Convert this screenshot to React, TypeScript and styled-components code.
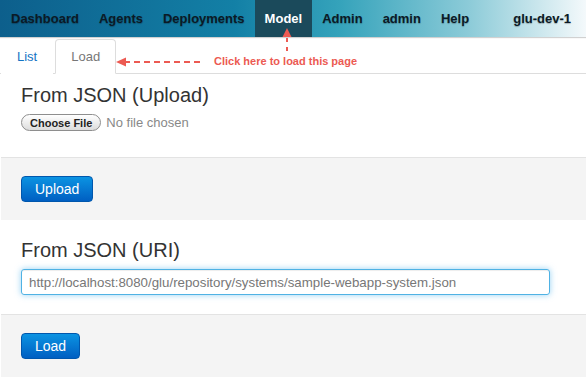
import React from 'react'
import styled, { createGlobalStyle } from 'styled-components'

const GlobalStyle = createGlobalStyle`
  html, body {
    margin: 0;
    padding: 0;
    background: #fff;
    font-family: "Liberation Sans", Arial, Helvetica, sans-serif;
    color: #333;
  }
`

const Page = styled.div`
  position: relative;
  width: 586px;
  min-height: 390px;
`

const NavBar = styled.div`
  display: flex;
  align-items: stretch;
  height: 37px;
  padding-left: 1px;
  background: linear-gradient(to right, #0d5f8c 0%, #1380a6 40%, #35a3bb 58%, #8ccbd8 80%, #f4f9fb 100%);
  box-shadow: 0 1px 1px rgba(0, 0, 0, 0.18);
`

const NavItem = styled.div<{ $active?: boolean; $right?: boolean }>`
  display: flex;
  align-items: center;
  padding: 0 ${({ $right }) => ($right ? '15px' : '10px')};
  margin-left: ${({ $right }) => ($right ? 'auto' : '0')};
  font-size: 13px;
  font-weight: bold;
  color: ${({ $active }) => ($active ? '#fff' : '#0b1a26')};
  background: ${({ $active }) => ($active ? '#1b4a5b' : 'transparent')};
  text-shadow: ${({ $active }) => ($active ? 'none' : '0 1px 1px rgba(0, 0, 0, 0.25)')};
`

const TabBar = styled.div`
  display: flex;
  margin-top: 2px;
  padding-left: 1px;
  height: 34px;
  border-bottom: 1px solid #ddd;
`

const Tab = styled.div<{ $active?: boolean }>`
  display: flex;
  align-items: center;
  padding: 0 15px;
  margin: 0 2px -1px 0;
  font-size: 13px;
  color: ${({ $active }) => ($active ? '#777' : '#1574c4')};
  background: #fff;
  border: 1px solid ${({ $active }) => ($active ? '#ddd' : 'transparent')};
  border-bottom-color: ${({ $active }) => ($active ? '#fff' : 'transparent')};
  border-radius: 4px 4px 0 0;
`

const Section = styled.div`
  padding: 0 21px;
`

const Heading = styled.h2<{ $top: number }>`
  margin: ${({ $top }) => $top}px 0 0;
  font-size: 20px;
  line-height: 26px;
  font-weight: normal;
  color: #333;
`

const FileRow = styled.div`
  display: flex;
  align-items: center;
  gap: 5px;
  margin-top: 6px;
  height: 17px;
`

const ChooseFile = styled.div`
  display: flex;
  align-items: center;
  height: 15px;
  padding: 0 8px;
  border: 1px solid #8e8e8e;
  border-radius: 9px;
  background: linear-gradient(to bottom, #ffffff, #dcdcdc);
  font-size: 11px;
  font-weight: bold;
  color: #222;
`

const NoFile = styled.span`
  font-size: 13px;
  color: #888;
`

const Actions = styled.div<{ $top: number }>`
  margin: ${({ $top }) => $top}px 0 0 1px;
  padding: 18px 20px;
  background: #f4f4f4;
  border-top: 1px solid #e3e3e3;
`

const PrimaryButton = styled.div`
  display: inline-flex;
  align-items: center;
  height: 24px;
  padding: 0 13px;
  border: 1px solid #0057ad;
  border-radius: 4px;
  background: linear-gradient(to bottom, #0b93e2, #005fc2);
  color: #fff;
  font-size: 14px;
`

const UriInput = styled.div`
  display: flex;
  align-items: center;
  margin-top: 6px;
  width: 529px;
  height: 26px;
  box-sizing: border-box;
  padding: 0 7px;
  border: 1px solid rgba(60, 170, 225, 0.9);
  border-radius: 3px;
  box-shadow: inset 0 1px 1px rgba(0, 0, 0, 0.075), 0 0 6px rgba(82, 180, 236, 0.6);
  font-size: 13.3px;
  color: #777;
  white-space: nowrap;
`

const Annotation = styled.svg`
  position: absolute;
  left: 0;
  top: 0;
  pointer-events: none;
`

const Callout = styled.span`
  position: absolute;
  left: 214px;
  top: 55px;
  font-size: 11px;
  font-weight: bold;
  color: #ec5a52;
  white-space: nowrap;
`

const navItems = ['Dashboard', 'Agents', 'Deployments', 'Model', 'Admin', 'admin', 'Help']

const App = () => (
  <Page>
    <GlobalStyle />
    <NavBar>
      {navItems.map(item => (
        <NavItem key={item} $active={item === 'Model'}>{item}</NavItem>
      ))}
      <NavItem $right>glu-dev-1</NavItem>
    </NavBar>
    <TabBar>
      <Tab>List</Tab>
      <Tab $active>Load</Tab>
    </TabBar>
    <Section>
      <Heading $top={8}>From JSON (Upload)</Heading>
      <FileRow>
        <ChooseFile>Choose File</ChooseFile>
        <NoFile>No file chosen</NoFile>
      </FileRow>
    </Section>
    <Actions $top={26}>
      <PrimaryButton>Upload</PrimaryButton>
    </Actions>
    <Section>
      <Heading $top={17}>From JSON (URI)</Heading>
      <UriInput>http://localhost:8080/glu/repository/systems/sample-webapp-system.json</UriInput>
    </Section>
    <Actions $top={19}>
      <PrimaryButton>Load</PrimaryButton>
    </Actions>

    <Annotation width="586" height="80" viewBox="0 0 586 80">
      <line x1="124" y1="62" x2="204" y2="62" stroke="#ec5a52" strokeWidth="2" strokeDasharray="6 4" />
      <polygon points="116,62 126,57.5 126,66.5" fill="#ec5a52" />
      <polygon points="287,28 282.5,37 291.5,37" fill="#ec5a52" />
      <line x1="287" y1="38" x2="287" y2="52" stroke="#ec5a52" strokeWidth="2" strokeDasharray="4 5" />
    </Annotation>
    <Callout>Click here to load this page</Callout>
  </Page>
)

export default App
